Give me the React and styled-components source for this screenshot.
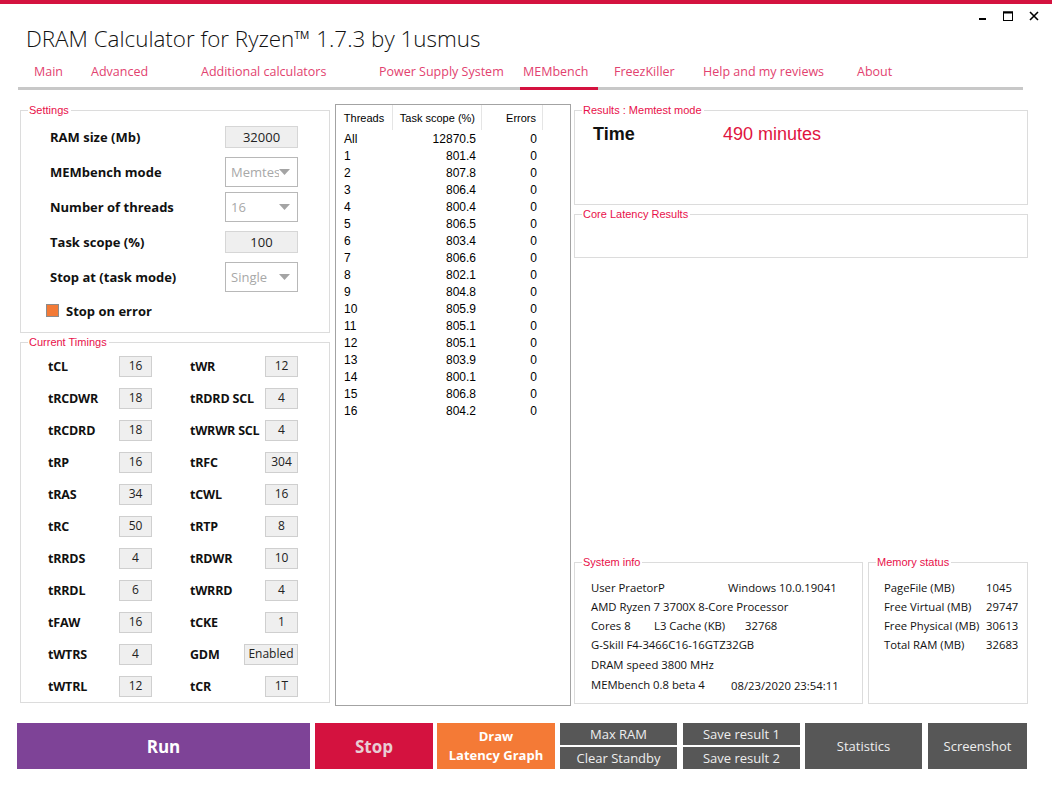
import React from 'react';
import styled, { createGlobalStyle } from 'styled-components';

const GlobalStyle = createGlobalStyle`
  html, body { margin: 0; padding: 0; background: #fff; }
  body { font-family: "Open Sans", "Liberation Sans", sans-serif; color: #111; }
  * { box-sizing: border-box; }
`;

const Window = styled.div`
  width: 1052px;
  height: 791px;
  overflow: hidden;
  background: #fff;
  border-top: 4px solid #d4123f;
  display: flex;
  flex-direction: column;
`;

const TitleBar = styled.header`
  display: flex;
  justify-content: space-between;
  align-items: flex-start;
  height: 52px;
  padding: 0 13px 0 26px;
`;

const Title = styled.h1`
  margin: 21px 0 0;
  font-weight: 300;
  font-size: 22.4px;
  line-height: 27px;
  color: #111;
  white-space: nowrap;
`;

const Controls = styled.div`
  display: flex;
  align-items: flex-start;
  margin-top: 7px;
  svg { display: block; }
  svg + svg { margin-left: 16px; }
`;

const TabBar = styled.nav`
  display: flex;
  align-items: center;
  height: 34px;
  margin: 0 29px 0 18px;
  border-bottom: 3px solid #c8c8c8;
`;

const Tab = styled.div`
  position: relative;
  flex: 0 0 ${p => p.$w}px;
  height: 100%;
  display: flex;
  align-items: center;
  padding-left: ${p => p.$pad || 3}px;
  font-size: 12.5px;
  color: #e2426f;
  white-space: nowrap;
  &::after {
    content: '';
    display: ${p => (p.$active ? 'block' : 'none')};
    position: absolute;
    left: 0;
    bottom: -3px;
    width: 78px;
    height: 3px;
    background: #d4123f;
  }
`;

const Content = styled.main`
  display: flex;
  height: 602px;
  margin-top: 14px;
  padding-left: 20px;
`;

const Column = styled.div`
  display: flex;
  flex-direction: column;
  width: ${p => p.$w}px;
  margin-left: ${p => p.$ml || 0}px;
  padding-bottom: ${p => p.$pb || 0}px;
  gap: ${p => p.$gap || 0}px;
`;

const Group = styled.fieldset`
  margin: ${p => p.$mt || 0}px 0 0;
  padding: 0;
  min-width: 0;
  border: 1px solid #dcdcdc;
  width: ${p => (p.$w ? `${p.$w}px` : 'auto')};
  height: ${p => (p.$h ? `${p.$h}px` : 'auto')};
  flex: ${p => (p.$grow ? 1 : 'none')};
`;

const Legend = styled.legend`
  margin-left: 7px;
  padding: 0 2px 0 1px;
  font-family: "Liberation Sans", Arial, sans-serif;
  font-size: 11px;
  line-height: 13px;
  color: #e8104a;
`;

const GroupBody = styled.div`
  padding: ${p => p.$pad};
`;

const SettingRow = styled.div`
  display: flex;
  align-items: center;
  height: 35px;
`;

const SettingLabel = styled.span`
  width: 175px;
  font-weight: 700;
  font-size: 13px;
  white-space: nowrap;
`;

const ValueBox = styled.div`
  width: 73px;
  height: 22px;
  background: #efefef;
  border: 1px solid #d6d6d6;
  display: flex;
  align-items: center;
  justify-content: center;
  font-size: 13px;
  color: #222;
`;

const Select = styled.div`
  width: 73px;
  height: 30px;
  background: #fff;
  border: 1px solid #b8b8b8;
  display: flex;
  align-items: center;
  padding: 0 7px 0 5px;
  font-size: 13px;
  color: #a8a8a8;
  span {
    flex: 1;
    min-width: 0;
    overflow: hidden;
    white-space: nowrap;
  }
  svg { flex: none; }
`;

const CheckRow = styled.label`
  display: flex;
  align-items: center;
  height: 33px;
  margin-left: -4px;
  font-weight: 700;
  font-size: 13px;
`;

const CheckMark = styled.span`
  width: 13px;
  height: 13px;
  margin-right: 7px;
  border: 1px solid #8c8c8c;
  background: #f37a36;
`;

const TimingRow = styled.div`
  display: grid;
  grid-template-columns: 71px 33px 38px 1fr auto;
  align-items: center;
  height: 32px;
`;

const TimingLabel = styled.span`
  font-weight: 700;
  font-size: 12.5px;
  letter-spacing: -0.2px;
  white-space: nowrap;
`;

const TimingBox = styled.div`
  width: ${p => (p.$wide ? 54 : 33)}px;
  height: 21px;
  background: #efefef;
  border: 1px solid #cfcfcf;
  display: flex;
  align-items: center;
  justify-content: center;
  padding-bottom: 2px;
  font-size: 12px;
  color: #222;
  justify-self: end;
`;

const ListView = styled.div`
  width: 236px;
  margin-left: 5px;
  border: 1px solid #a3a3a3;
  font-family: "Liberation Sans", Arial, sans-serif;
  color: #000;
`;

const ListHeader = styled.div`
  display: grid;
  grid-template-columns: 57px 89px 61px 1fr;
  height: 25px;
  font-size: 11px;
`;

const HeadCell = styled.div`
  display: flex;
  align-items: center;
  justify-content: ${p => p.$align || 'flex-end'};
  padding: 0 6px;
  border-right: ${p => (p.$last ? 'none' : '1px solid #e5e5e5')};
`;

const ListRow = styled.div`
  display: grid;
  grid-template-columns: 57px 89px 61px 1fr;
  height: 17px;
  align-items: center;
  font-size: 12px;
`;

const Cell = styled.span`
  text-align: ${p => p.$align || 'right'};
  padding: ${p => (p.$align === 'left' ? '0 0 0 8px' : '0 6px 0 0')};
`;

const ResultRow = styled.div`
  display: flex;
  align-items: center;
  height: 22px;
  font-family: "Liberation Sans", Arial, sans-serif;
  font-size: 18px;
`;

const TimeLabel = styled.span`
  width: 130px;
  font-weight: 700;
`;

const TimeValue = styled.span`
  color: #e0143f;
`;

const Spacer = styled.div`
  flex: 1;
`;

const InfoGrid = styled.div`
  display: flex;
  gap: 5px;
  height: 148px;
`;

const InfoRow = styled.div`
  display: flex;
  align-items: center;
  height: 19px;
  margin-top: ${p => p.$mt || 0}px;
  font-size: 11.3px;
  color: #111;
  white-space: nowrap;
`;

const InfoCell = styled.span`
  flex: 0 0 ${p => (p.$w ? `${p.$w}px` : 'auto')};
  padding-top: ${p => p.$pt || 0}px;
`;

const ButtonBar = styled.footer`
  display: flex;
  height: 46px;
  margin-top: 17px;
  padding-left: 17px;
`;

const Button = styled.button`
  flex: 0 0 ${p => p.$w}px;
  height: 46px;
  margin-left: ${p => p.$ml || 0}px;
  border: none;
  padding: 0;
  background: ${p => p.$bg};
  color: ${p => p.$color || '#fff'};
  font-family: "Open Sans", sans-serif;
  font-weight: ${p => p.$weight || 400};
  font-size: ${p => p.$size || 13}px;
  line-height: ${p => p.$lh || 'normal'};
  cursor: pointer;
`;

const ButtonStack = styled.div`
  flex: 0 0 117px;
  margin-left: ${p => p.$ml}px;
  display: flex;
  flex-direction: column;
  justify-content: space-between;
  height: 46px;
`;

const StackButton = styled.button`
  height: 22px;
  width: 100%;
  border: none;
  padding: 0;
  background: #575757;
  color: #eee;
  font-family: "Open Sans", sans-serif;
  font-size: 13px;
  cursor: pointer;
`;

const Arrow = () => (
  <svg width="11" height="6" viewBox="0 0 11 6">
    <path d="M0 0 H11 L5.5 6 Z" fill="#a4a4a4" />
  </svg>
);

const tabs = [
  { name: 'Main', w: 70, pad: 16 },
  { name: 'Advanced', w: 110 },
  { name: 'Additional calculators', w: 178 },
  { name: 'Power Supply System', w: 144 },
  { name: 'MEMbench', w: 91, active: true },
  { name: 'FreezKiller', w: 89 },
  { name: 'Help and my reviews', w: 154 },
  { name: 'About', w: 100 },
];

const timings = [
  ['tCL', '16', 'tWR', '12'],
  ['tRCDWR', '18', 'tRDRD SCL', '4'],
  ['tRCDRD', '18', 'tWRWR SCL', '4'],
  ['tRP', '16', 'tRFC', '304'],
  ['tRAS', '34', 'tCWL', '16'],
  ['tRC', '50', 'tRTP', '8'],
  ['tRRDS', '4', 'tRDWR', '10'],
  ['tRRDL', '6', 'tWRRD', '4'],
  ['tFAW', '16', 'tCKE', '1'],
  ['tWTRS', '4', 'GDM', 'Enabled'],
  ['tWTRL', '12', 'tCR', '1T'],
];

const threads = [
  ['All', '12870.5'], ['1', '801.4'], ['2', '807.8'], ['3', '806.4'], ['4', '800.4'],
  ['5', '806.5'], ['6', '803.4'], ['7', '806.6'], ['8', '802.1'], ['9', '804.8'],
  ['10', '805.9'], ['11', '805.1'], ['12', '805.1'], ['13', '803.9'], ['14', '800.1'],
  ['15', '806.8'], ['16', '804.2'],
];

const memory = [
  ['PageFile (MB)', '1045'],
  ['Free Virtual (MB)', '29747'],
  ['Free Physical (MB)', '30613'],
  ['Total RAM (MB)', '32683'],
];

export default function App() {
  return (
    <Window>
      <GlobalStyle />
      <TitleBar>
        <Title>DRAM Calculator for Ryzen™ 1.7.3 by 1usmus</Title>
        <Controls>
          <svg width="10" height="10" viewBox="0 0 10 10">
            <rect x="2" y="7" width="7" height="2" fill="#000" />
          </svg>
          <svg width="10" height="10" viewBox="0 0 10 10">
            <rect x="0.5" y="1" width="9" height="8.5" fill="none" stroke="#000" strokeWidth="1" />
            <rect x="0" y="0.5" width="10" height="2" fill="#000" />
          </svg>
          <svg width="10" height="10" viewBox="0 0 10 10">
            <path d="M1 1 L9 9 M9 1 L1 9" stroke="#000" strokeWidth="1.6" />
          </svg>
        </Controls>
      </TitleBar>

      <TabBar>
        {tabs.map(t => (
          <Tab key={t.name} $w={t.w} $pad={t.pad} $active={t.active}>{t.name}</Tab>
        ))}
      </TabBar>

      <Content>
        <Column $w={310} $gap={3} $pb={4}>
          <Group $h={229}>
            <Legend>Settings</Legend>
            <GroupBody $pad="2px 0 0 29px">
              <SettingRow>
                <SettingLabel>RAM size (Mb)</SettingLabel>
                <ValueBox>32000</ValueBox>
              </SettingRow>
              <SettingRow>
                <SettingLabel>MEMbench mode</SettingLabel>
                <Select><span>Memtest</span><Arrow /></Select>
              </SettingRow>
              <SettingRow>
                <SettingLabel>Number of threads</SettingLabel>
                <Select><span>16</span><Arrow /></Select>
              </SettingRow>
              <SettingRow>
                <SettingLabel>Task scope (%)</SettingLabel>
                <ValueBox>100</ValueBox>
              </SettingRow>
              <SettingRow>
                <SettingLabel>Stop at (task mode)</SettingLabel>
                <Select><span>Single</span><Arrow /></Select>
              </SettingRow>
              <CheckRow>
                <CheckMark />
                Stop on error
              </CheckRow>
            </GroupBody>
          </Group>

          <Group $grow>
            <Legend>Current Timings</Legend>
            <GroupBody $pad="1px 31px 0 27px">
              {timings.map(([a, av, b, bv]) => (
                <TimingRow key={a}>
                  <TimingLabel>{a}</TimingLabel>
                  <TimingBox>{av}</TimingBox>
                  <span />
                  <TimingLabel>{b}</TimingLabel>
                  <TimingBox $wide={bv === 'Enabled'}>{bv}</TimingBox>
                </TimingRow>
              ))}
            </GroupBody>
          </Group>
        </Column>

        <ListView>
          <ListHeader>
            <HeadCell $align="center">Threads</HeadCell>
            <HeadCell>Task scope (%)</HeadCell>
            <HeadCell>Errors</HeadCell>
            <HeadCell $last />
          </ListHeader>
          {threads.map(([t, v]) => (
            <ListRow key={t}>
              <Cell $align="left">{t}</Cell>
              <Cell>{v}</Cell>
              <Cell>0</Cell>
            </ListRow>
          ))}
        </ListView>

        <Column $w={454} $ml={3} $pb={2}>
          <Group $h={101}>
            <Legend>Results : Memtest mode</Legend>
            <GroupBody $pad="6px 0 0 18px">
              <ResultRow>
                <TimeLabel>Time</TimeLabel>
                <TimeValue>490 minutes</TimeValue>
              </ResultRow>
            </GroupBody>
          </Group>
          <Group $h={50} $mt={3}>
            <Legend>Core Latency Results</Legend>
          </Group>
          <Spacer />
          <InfoGrid>
            <Group $w={289}>
              <Legend>System info</Legend>
              <GroupBody $pad="9px 0 0 16px">
                <InfoRow>
                  <InfoCell $w={137}>User PraetorP</InfoCell>
                  <InfoCell>Windows 10.0.19041</InfoCell>
                </InfoRow>
                <InfoRow>AMD Ryzen 7 3700X 8-Core Processor</InfoRow>
                <InfoRow>
                  <InfoCell $w={63}>Cores 8</InfoCell>
                  <InfoCell $w={91}>L3 Cache (KB)</InfoCell>
                  <InfoCell>32768</InfoCell>
                </InfoRow>
                <InfoRow>G-Skill F4-3466C16-16GTZ32GB</InfoRow>
                <InfoRow $mt={1}>DRAM speed 3800 MHz</InfoRow>
                <InfoRow $mt={1}>
                  <InfoCell $w={140}>MEMbench 0.8 beta 4</InfoCell>
                  <InfoCell $pt={2}>08/23/2020 23:54:11</InfoCell>
                </InfoRow>
              </GroupBody>
            </Group>
            <Group $w={160}>
              <Legend>Memory status</Legend>
              <GroupBody $pad="9px 0 0 15px">
                {memory.map(([k, v]) => (
                  <InfoRow key={k}>
                    <InfoCell $w={102}>{k}</InfoCell>
                    <InfoCell>{v}</InfoCell>
                  </InfoRow>
                ))}
              </GroupBody>
            </Group>
          </InfoGrid>
        </Column>
      </Content>

      <ButtonBar>
        <Button $w={293} $bg="#7e4397" $weight={700} $size={17}>Run</Button>
        <Button $w={118} $ml={5} $bg="#d4123f" $color="#e8cdd4" $weight={700} $size={17}>Stop</Button>
        <Button $w={118} $ml={4} $bg="#f47a36" $weight={700} $size={13} $lh="19px">
          Draw<br />Latency Graph
        </Button>
        <ButtonStack $ml={5}>
          <StackButton>Max RAM</StackButton>
          <StackButton>Clear Standby</StackButton>
        </ButtonStack>
        <ButtonStack $ml={6}>
          <StackButton>Save result 1</StackButton>
          <StackButton>Save result 2</StackButton>
        </ButtonStack>
        <Button $w={117} $ml={5} $bg="#575757" $color="#eee">Statistics</Button>
        <Button $w={99} $ml={6} $bg="#575757" $color="#eee">Screenshot</Button>
      </ButtonBar>
    </Window>
  );
}
